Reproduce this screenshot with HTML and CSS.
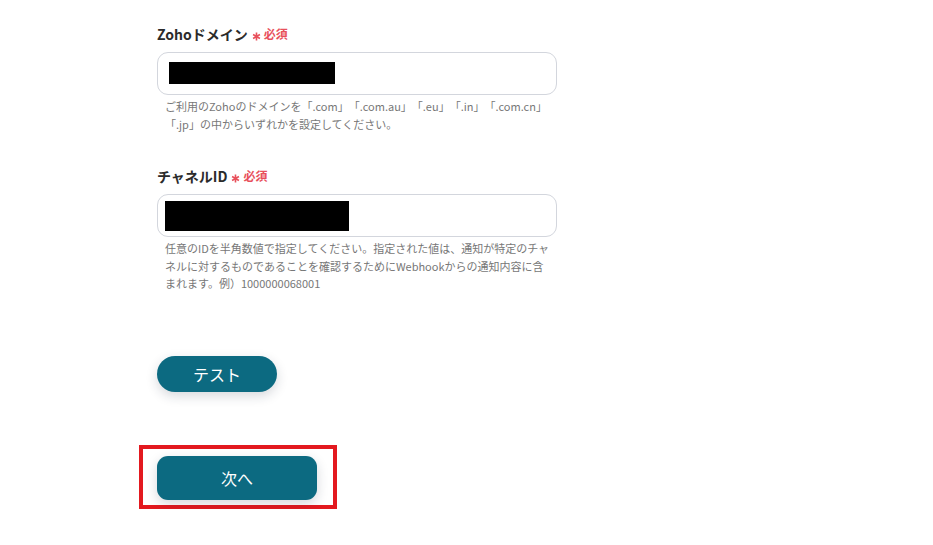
FILE: index.html
```html
<!DOCTYPE html>
<html lang="ja">
<head>
<meta charset="utf-8">
<title>Zoho設定</title>
<link rel="stylesheet" href="styles.css">
</head>
<body>
<main class="form">
  <section class="field field-first">
    <div class="label">Zohoドメイン<span class="req"><svg class="ast" viewBox="0 0 10 10" width="9" height="9"><path d="M5 0.6V9.4M1.2 2.8L8.8 7.2M1.2 7.2L8.8 2.8"/></svg>必須</span></div>
    <div class="input"><span class="mask mask-domain"></span></div>
    <p class="help">ご利用のZohoのドメインを「.com」「.com.au」「.eu」「.in」「.com.cn」「.jp」の中からいずれかを設定してください。</p>
  </section>
  <section class="field">
    <div class="label">チャネルID<span class="req"><svg class="ast" viewBox="0 0 10 10" width="9" height="9"><path d="M5 0.6V9.4M1.2 2.8L8.8 7.2M1.2 7.2L8.8 2.8"/></svg>必須</span></div>
    <div class="input input-channel"><span class="mask mask-channel"></span></div>
    <p class="help">任意のIDを半角数値で指定してください。指定された値は、通知が特定のチャネルに対するものであることを確認するためにWebhookからの通知内容に含まれます。例）1000000068001</p>
  </section>
  <div class="actions">
    <button class="btn btn-test" type="button">テスト</button>
    <div class="highlight">
      <button class="btn btn-next" type="button">次へ</button>
    </div>
  </div>
</main>
</body>
</html>
```

FILE: styles.css
```css
html, body {
  margin: 0;
  padding: 0;
  background: #ffffff;
}
body {
  font-family: "Noto Sans CJK JP", "Noto Sans", sans-serif;
  color: #333333;
}
.form {
  width: 400px;
  margin-left: 157px;
  display: flex;
  flex-direction: column;
}
.field-first {
  padding-top: 24px;
}
.field + .field {
  margin-top: 33px;
}
.label {
  font-size: 14px;
  line-height: 20px;
  font-weight: 700;
  color: #2b2b2b;
  display: flex;
  align-items: center;
}
.req {
  color: #e8505b;
  font-size: 12px;
  font-weight: 700;
  margin-left: 4px;
  display: inline-flex;
  align-items: center;
}
.ast {
  stroke: #e8505b;
  stroke-width: 1.8;
  fill: none;
  margin-right: 3px;
  position: relative;
  top: 2px;
}
.input {
  margin-top: 8px;
  box-sizing: border-box;
  height: 43px;
  border: 1px solid #d3d6dd;
  border-radius: 11px;
  padding: 9px 0 0 11px;
  background: #fff;
}
.input-channel {
  padding: 6px 0 0 7px;
}
.mask {
  display: block;
  background: #000;
}
.mask-domain {
  width: 166px;
  height: 22px;
}
.mask-channel {
  width: 184px;
  height: 30px;
}
.help {
  margin: 3px 0 0;
  padding: 0 3px 0 8px;
  font-size: 11px;
  line-height: 17.5px;
  color: #777777;
  text-spacing-trim: space-all;
}
.actions {
  margin-top: 63px;
  display: flex;
  flex-direction: column;
  align-items: flex-start;
}
.btn {
  border: none;
  background: #0c6a81;
  color: #ffffff;
  font-family: "Noto Sans CJK JP", "Noto Sans", sans-serif;
  font-size: 16px;
  cursor: pointer;
  box-shadow: 0 4px 12px rgba(30, 40, 60, 0.18);
}
.btn-test {
  width: 120px;
  height: 36px;
  border-radius: 18px;
}
.highlight {
  margin-top: 53px;
  margin-left: -18px;
  border: 4px solid #e3191f;
  padding: 7px 16px 5px 14px;
}
.btn-next {
  display: block;
  width: 160px;
  height: 44px;
  border-radius: 11px;
}
```
